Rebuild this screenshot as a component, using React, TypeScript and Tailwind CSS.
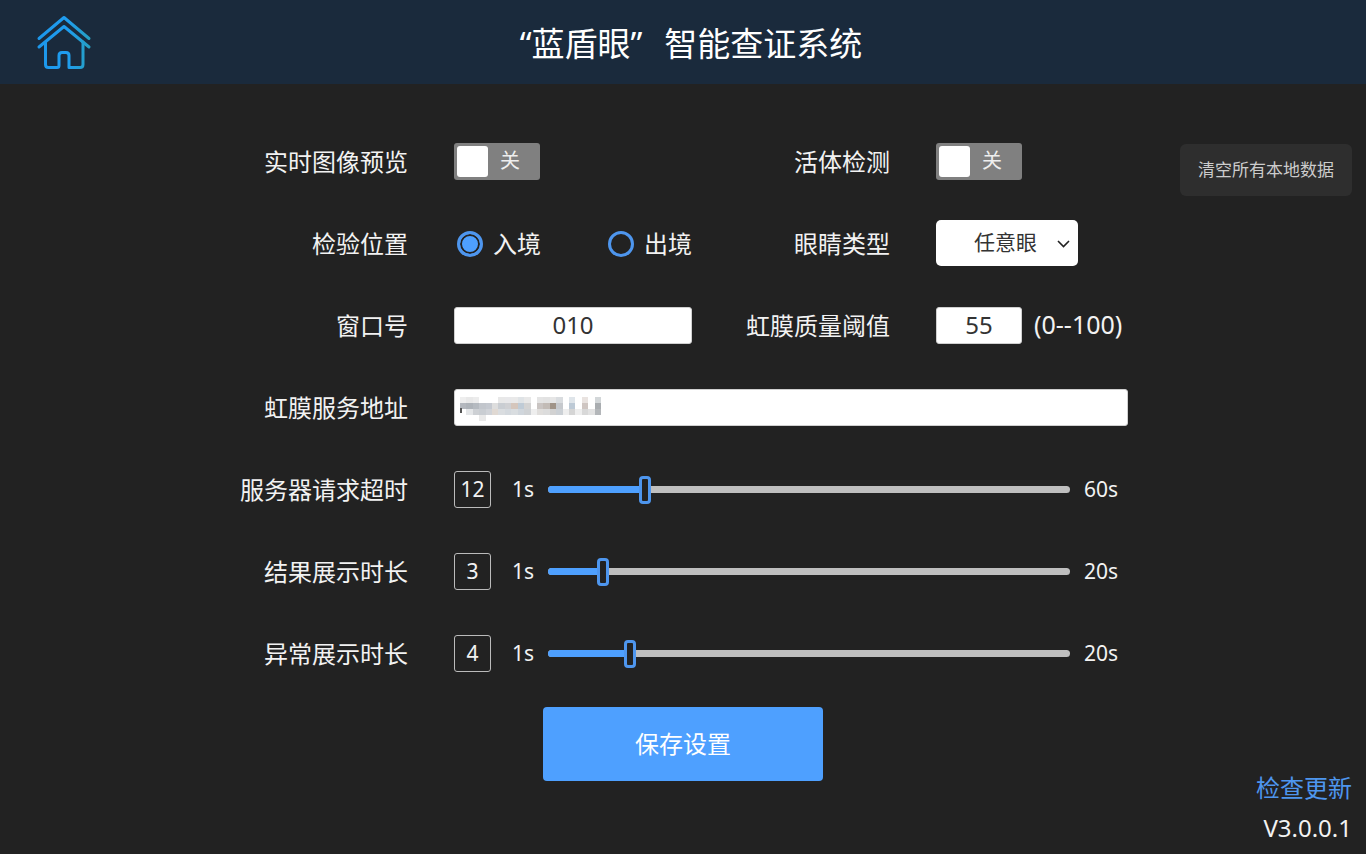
import { useState } from 'react';

const LABEL = 'pt-0.5 text-right text-2xl whitespace-nowrap';
const ROW = 'grid h-[82px] grid-cols-[170px_238px_152px_1fr] items-center gap-x-[46px]';
const BOX = 'h-[37px] rounded-[3px] border border-[#d0d0d0] bg-white pb-0.5 text-center text-2xl text-[#333] outline-none';

function HomeIcon() {
    return (
        <svg width="56" height="56" viewBox="0 0 56 56" fill="none" stroke="url(#home)" strokeWidth="3" strokeLinecap="round" strokeLinejoin="round">
            <defs>
                <linearGradient id="home" x1="0" y1="56" x2="56" y2="56" gradientUnits="userSpaceOnUse">
                    <stop offset="0" stopColor="#1c96ea" />
                    <stop offset="0.55" stopColor="#1f9df0" />
                    <stop offset="1" stopColor="#26a0bd" />
                </linearGradient>
            </defs>
            <path d="M3 23.5 28 2.5l25 21" />
            <path d="M3 32 28 11.5 53 32" />
            <path d="M9.5 27v22.5q0 3 3 3h8.5q2 0 2-2V40.5q0-3 3-3h4q3 0 3 3v12h11q3 0 3-3V27" />
        </svg>
    );
}

function Toggle({ id, label }: { id: string; label: string }) {
    const [on, setOn] = useState(false);

    return (
        <button
            id={id}
            type="button"
            role="switch"
            aria-checked={on}
            aria-label={label}
            onClick={() => setOn(!on)}
            className={`flex h-[37px] w-[86px] items-center gap-3 rounded-[3px] px-[3px] text-xl ${on ? 'flex-row-reverse bg-[#4ea0ff]' : 'bg-[#808080]'}`}
        >
            <span className="size-[31px] rounded-[3px] bg-white" />
            <span className="text-[#eee]">{on ? '开' : '关'}</span>
        </button>
    );
}

interface SliderRowProps {
    id: string;
    label: string;
    initial: number;
    max: number;
}

function SliderRow({ id, label, initial, max }: SliderRowProps) {
    const [value, setValue] = useState(initial);
    const percent = ((value - 1) / (max - 1)) * 100;

    return (
        <div className={ROW}>
            <label htmlFor={id} className={LABEL}>
                {label}
            </label>
            <div className="col-span-3 flex items-center text-[21px]">
                <output htmlFor={id} className="flex size-[37px] items-center justify-center rounded-[3px] border border-[#bbb] pt-0.5">
                    {value}
                </output>
                <span className="ml-[21px] w-9 pt-0.5">1s</span>
                <div className="relative h-[7px] flex-1 rounded-full bg-[#bfbfbf]">
                    <div className="h-full rounded-full bg-[#4ea0ff]" style={{ width: `${percent}%` }} />
                    {/* thumb is centred on the value, so the input sticks out by half a thumb */}
                    <input
                        id={id}
                        type="range"
                        min={1}
                        max={max}
                        value={value}
                        onChange={(e) => setValue(Number(e.target.value))}
                        className="absolute -inset-x-1.5 -top-2.5 h-7 appearance-none bg-transparent outline-none [&::-webkit-slider-thumb]:h-7 [&::-webkit-slider-thumb]:w-3 [&::-webkit-slider-thumb]:appearance-none [&::-webkit-slider-thumb]:rounded-sm [&::-webkit-slider-thumb]:border-[3px] [&::-webkit-slider-thumb]:border-[#4e96ee] [&::-webkit-slider-thumb]:bg-[#222]"
                    />
                </div>
                <span className="w-[58px] pt-0.5 pl-3.5">{max}s</span>
            </div>
        </div>
    );
}

// masked service address, one array per line of blocks
const MASK = [
    ['#eee', '#e8e8e8', '#ececec', '', '', '', '#e8e8e8', '#e8e8ea', '#e9e9e9', '#dfe3e6', '#e8e8e8', '', '#e4e4e4', '#e2e2e2', '#e6e6e6', '#d9dcdf', '', '#dfe5ea', '', '#e9e3e0', '', '#d3d7d9'],
    ['#b4b8be', '#aeb3b9', '#b5bac0', '#c2c6cc', '#c5c9d0', '#ddd', '#c9cdd2', '#cfd0d3', '#d5c6bc', '#bfcbd6', '#d3d3d3', '', '#c9c4c2', '#c2bbb6', '#a09488', '#c6c9cd', '', '#bdcad6', '', '#cfc6c2', '', '#a9adb0'],
    ['', '#e4e6e8', '#cdd0d4', '#c9cdd2', '#d0d3d8', '#e0d9d3', '#dadde0', '#d4d9de', '#d9dde0', '#d0d6dc', '#cfd2d5', '#eee', '#e0dedc', '#dcdcdc', '#d2d2d2', '#cbd0d5', '#eee', '#d5d5d5', '#eee', '#d8d8d8', '#e2e2e2', '#b3b6b9'],
    ['', '', '', '#e9e9e9', '', '', '', '', '', '', '', '', '', '', '', '', '', '', '', '', '', ''],
];

function Mask() {
    return (
        <svg className="pointer-events-none absolute top-2 left-1.5" width="141" height="24" viewBox="0 0 22 4" preserveAspectRatio="none" shapeRendering="crispEdges" aria-hidden="true">
            {MASK.map((line, y) => line.map((fill, x) => fill && <rect key={`${x}-${y}`} x={x} y={y} width="1" height="1" fill={fill} />))}
            <rect x="0" y="1.9" width="0.3" height="0.8" fill="#555" />
        </svg>
    );
}

export default function App() {
    const [position, setPosition] = useState('in');
    const radio =
        'size-[26px] appearance-none rounded-full border-[3px] border-[#4e96ee] checked:bg-[#4ea0ff] checked:shadow-[inset_0_0_0_2px_#222]';

    return (
        <div className="flex min-h-screen flex-col bg-[#222] font-['Noto_Sans','Noto_Sans_CJK_SC',sans-serif] text-[#f2f2f2]" lang="zh-CN">
            <header className="grid h-[84px] grid-cols-[1fr_auto_1fr] items-center bg-[#1a2a3c] pt-0.5">
                <a href="#" aria-label="首页" className="ml-9 w-fit">
                    <HomeIcon />
                </a>
                <h1 className="pt-0.5 pl-4 text-[33px] text-white">
                    “蓝盾眼”<span className="ml-[22px]">智能查证系统</span>
                </h1>
            </header>

            <main className="flex flex-1">
                <div className="flex-1 pl-3.5" />
                <form className="w-[890px] pt-9" onSubmit={(e) => e.preventDefault()}>
                    <div className={ROW}>
                        <label htmlFor="preview" className={LABEL}>
                            实时图像预览
                        </label>
                        <Toggle id="preview" label="实时图像预览" />
                        <label htmlFor="liveness" className={LABEL}>
                            活体检测
                        </label>
                        <Toggle id="liveness" label="活体检测" />
                    </div>

                    <div className={ROW}>
                        <span id="position" className={LABEL}>
                            检验位置
                        </span>
                        <div role="radiogroup" aria-labelledby="position" className="flex justify-between pt-0.5 pl-[3px] text-2xl">
                            <label className="flex items-center gap-2.5 whitespace-nowrap">
                                <input type="radio" name="position" className={radio} checked={position === 'in'} onChange={() => setPosition('in')} />
                                入境
                            </label>
                            <label className="flex items-center gap-2.5 whitespace-nowrap">
                                <input type="radio" name="position" className={radio} checked={position === 'out'} onChange={() => setPosition('out')} />
                                出境
                            </label>
                        </div>
                        <label htmlFor="eye" className={LABEL}>
                            眼睛类型
                        </label>
                        <div className="relative w-[142px]">
                            <select id="eye" className="h-[46px] w-full appearance-none rounded-[5px] bg-white pl-[38px] text-[21px] text-[#333]">
                                <option>任意眼</option>
                                <option>左眼</option>
                                <option>右眼</option>
                            </select>
                            <svg className="pointer-events-none absolute top-5 right-2" width="13" height="8" viewBox="0 0 13 8" fill="none" stroke="#222" strokeWidth="1.6">
                                <path d="m1 1 5.5 5.5L12 1" />
                            </svg>
                        </div>
                    </div>

                    <div className={ROW}>
                        <label htmlFor="window" className={LABEL}>
                            窗口号
                        </label>
                        <input id="window" type="text" defaultValue="010" className={BOX} />
                        <label htmlFor="quality" className={LABEL}>
                            虹膜质量阈值
                        </label>
                        <div className="flex items-center gap-3 text-[25px]">
                            <input id="quality" type="text" defaultValue="55" className={`${BOX} w-[86px]`} />
                            <span>(0--100)</span>
                        </div>
                    </div>

                    <div className={ROW}>
                        <label htmlFor="address" className={LABEL}>
                            虹膜服务地址
                        </label>
                        <div className="relative col-span-3 flex">
                            <input id="address" type="text" className={`${BOX} w-full`} />
                            <Mask />
                        </div>
                    </div>

                    <SliderRow id="timeout" label="服务器请求超时" initial={12} max={60} />
                    <SliderRow id="result" label="结果展示时长" initial={3} max={20} />
                    <SliderRow id="error" label="异常展示时长" initial={4} max={20} />

                    <button type="submit" className="mx-auto mt-[13px] block h-[74px] w-[280px] rounded-[4px] bg-[#4ea0ff] text-2xl text-white">
                        保存设置
                    </button>
                </form>

                <aside className="flex flex-1 flex-col items-end justify-between pt-[60px] pr-3.5 pb-2.5">
                    <button type="button" className="h-[52px] rounded-md bg-[#2e2e2e] px-[18px] text-[17px] whitespace-nowrap text-[#ccc]">
                        清空所有本地数据
                    </button>
                    <div className="flex flex-col items-end gap-2 text-2xl leading-8">
                        <a href="#" className="text-[#4e96ee]">
                            检查更新
                        </a>
                        <span>V3.0.0.1</span>
                    </div>
                </aside>
            </main>
        </div>
    );
}
